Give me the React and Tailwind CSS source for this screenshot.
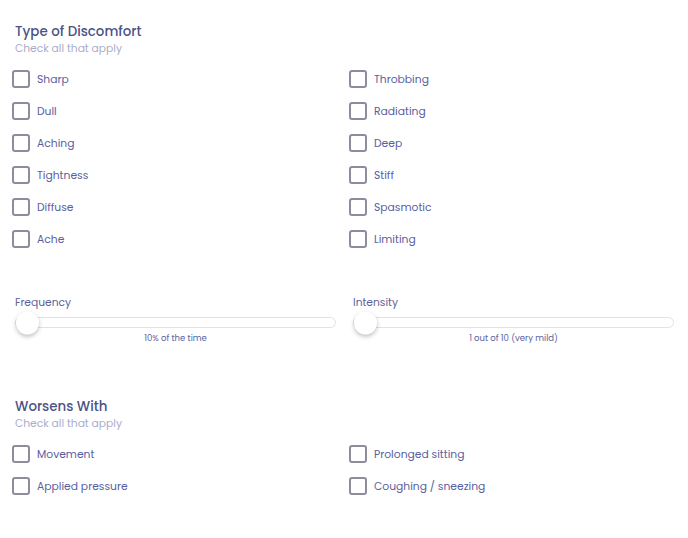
import React, { useState } from "react";

const discomfort = [
  ["Sharp", "Throbbing"],
  ["Dull", "Radiating"],
  ["Aching", "Deep"],
  ["Tightness", "Stiff"],
  ["Diffuse", "Spasmotic"],
  ["Ache", "Limiting"],
];

const worsens = [
  ["Movement", "Prolonged sitting"],
  ["Applied pressure", "Coughing / sneezing"],
];

function Check({ label }) {
  const [on, setOn] = useState(false);
  return (
    <label className="flex h-[32px] items-center gap-[7px] cursor-pointer">
      <span
        onClick={() => setOn(!on)}
        className={`h-[18px] w-[18px] rounded-[3px] border-2 border-[#8d8c9c] ${on ? "bg-[#5b63a3]" : "bg-white"}`}
      />
      <span className="pt-[2px] text-[10.75px] leading-[16px] text-[#5960a0]">{label}</span>
    </label>
  );
}

function Section({ title, rows }) {
  return (
    <div>
      <div className="pl-[3px] pt-[1px]">
        <h2 className="h-[18px] text-[13.4px] leading-[18px] font-medium text-[#4c5386]">{title}</h2>
        <p className="h-[16px] text-[10.7px] leading-[16px] text-[#a9accb]">Check all that apply</p>
      </div>
      <div className="mt-[6px] grid grid-cols-[337px_1fr]">
        {rows.map(([a, b]) => (
          <React.Fragment key={a}>
            <Check label={a} />
            <Check label={b} />
          </React.Fragment>
        ))}
      </div>
    </div>
  );
}

function Slider({ label, caption }) {
  return (
    <div className="w-[321px]">
      <div className="h-[17px] pt-[1px] text-[10.7px] leading-[16px] text-[#5d6298]">{label}</div>
      <div className="relative mt-[6px] h-[11px] rounded-full border border-[#e2e0f0] bg-white">
        <div className="absolute left-0 top-1/2 h-[23px] w-[23px] -translate-y-1/2 rounded-full bg-white shadow-[0_2px_4px_rgba(0,0,0,0.25)]" />
      </div>
      <div className="mt-[4px] text-center text-[8.5px] leading-[12px] text-[#5960a0]">{caption}</div>
    </div>
  );
}

export default function App() {
  return (
    <div className="min-h-[538px] w-[688px] bg-white pl-[12px] pt-[22px] font-['Poppins','Open_Sans',sans-serif]">
      <Section title="Type of Discomfort" rows={discomfort} />
      <div className="mt-[39px] flex gap-[17px] pl-[3px]">
        <Slider label="Frequency" caption="10% of the time" />
        <Slider label="Intensity" caption="1 out of 10 (very mild)" />
      </div>
      <div className="mt-[53px]">
        <Section title="Worsens With" rows={worsens} />
      </div>
    </div>
  );
}
